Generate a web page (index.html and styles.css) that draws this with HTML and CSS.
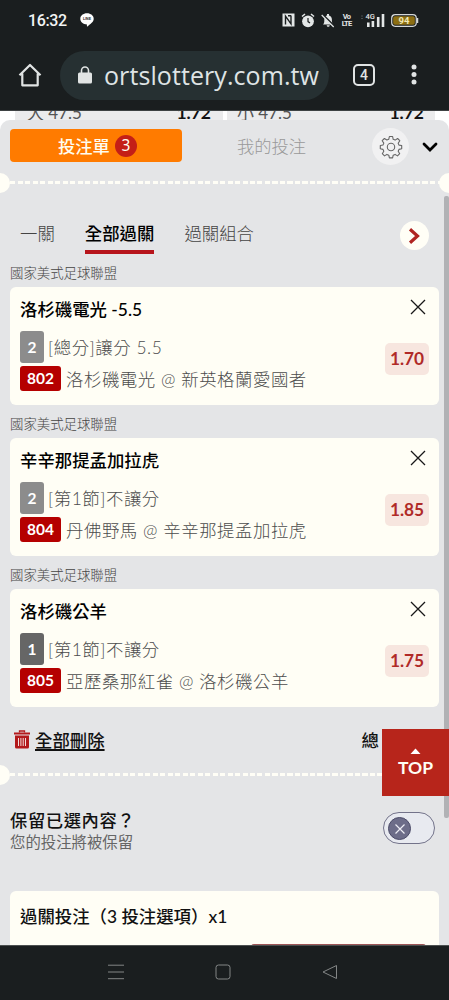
FILE: index.html
```html
<!DOCTYPE html>
<html lang="zh-Hant">
<head>
<meta charset="utf-8">
<title>投注單</title>
<link rel="stylesheet" href="styles.css">
</head>
<body>
<div class="phone">
  <header class="chrome">
    <div class="status">
      <span class="clock">16:32</span>
      <svg class="line-icon" width="14" height="14" viewBox="0 0 14 14"><path d="M7 .3C10.800.3 13.700 2.700 13.700 5.800C13.700 9 10.500 10.900 7.500 13.400C6.700 14 6.900 12.500 7 11.500C3.200 11.500.3 9 .3 5.800C.3 2.700 3.200.3 7 .3z" fill="#fff"/><text x="7" y="7.300" text-anchor="middle" class="line-label">LINE</text></svg>
      <div class="status-icons">
        <svg width="13" height="14" viewBox="0 0 13 14"><path d="M.5.500h12v13h-12z" fill="#e3e6e6"/><path d="M3.500 11.500V3.200l5.500 7.600V2.500M6 2.800h3" fill="none" stroke="#1a1e1f" stroke-width="1.400"/></svg>
        <svg class="gap-a" width="14" height="15" viewBox="0 0 14 15"><circle cx="7" cy="8.300" r="5.900" fill="#e3e6e6"/><path d="M1 3.500L4 1M13 3.500L10 1" stroke="#e3e6e6" stroke-width="1.600"/><path d="M7 5v3.600l2 1.500" fill="none" stroke="#1a1e1f" stroke-width="1.200"/></svg>
        <svg class="gap-b" width="14" height="15" viewBox="0 0 14 15"><path d="M2 11.500c1.500-1.200 1.300-3 1.300-5C3.500 3.800 5 2.800 6 2.500V1h2v1.500c1.500.3 2.900 2 2.900 4 0 2 0 3.800 1.300 5zM5.700 12.300h3c0 2-3 2-3 0z" fill="#e3e6e6"/><path d="M1.500 1.500l12 12" stroke="#1a1e1f" stroke-width="2"/><path d="M.700 2l12 12" stroke="#e3e6e6" stroke-width="1.200"/></svg>
        <span class="volte">Vo<br>LTE</span>
        <svg class="signal" width="24" height="15" viewBox="0 0 24 15"><path d="M.5 3h1M.5 5.500h1" stroke="#767b7c"/><text x="4.500" y="6.300" class="fourg">4G</text><path d="M7.300 14V9.500M11.900 14V8M17.200 14V4M22 14V1" stroke="#e3e6e6" stroke-width="2.600"/></svg>
        <svg class="battery" width="28" height="13" viewBox="0 0 28 13"><rect x=".7" y=".7" width="24.600" height="11.600" rx="3.500" fill="#1a1e1f" stroke="#d5d8d7" stroke-width="1.200"/><rect x="2.200" y="2.200" width="21.600" height="8.600" rx="1.800" fill="#8c6e12"/><path d="M26.500 4v5" stroke="#d5d8d7" stroke-width="1.500"/><text x="13" y="10" text-anchor="middle" class="battery-label">94</text></svg>
      </div>
    </div>
    <div class="toolbar">
      <svg class="home" width="24" height="24" viewBox="0 0 24 24"><path d="M1.500 12.300L12 2l10.500 10.300M4.300 10.500v11.800h15.400V10.500" fill="none" stroke="#e1e4e4" stroke-width="2.200" stroke-linejoin="round"/></svg>
      <div class="address">
        <svg width="14" height="18" viewBox="0 0 14 18"><rect x="0" y="6.500" width="14" height="11" rx="1.500" fill="#e1e4e4"/><path d="M3.500 7V4.500a3.500 3.500 0 0 1 7 0V7" fill="none" stroke="#e1e4e4" stroke-width="1.600"/></svg>
        <div class="url">ortslottery.com.tw</div>
      </div>
      <div class="tabcount">4</div>
      <svg class="dots" width="6" height="22" viewBox="0 0 6 22"><g fill="#e1e4e4"><circle cx="3" cy="3" r="2.500"/><circle cx="3" cy="10.500" r="2.500"/><circle cx="3" cy="18" r="2.500"/></g></svg>
    </div>
  </header>

  <div class="strip">
    <div class="strip-cell first"><span>大 47.5</span><b>1.72</b></div>
    <div class="strip-cell second"><span>小 47.5</span><b>1.72</b></div>
  </div>

  <main class="panel">
    <div class="panel-head">
      <div class="slip-tab">投注單<span class="count">3</span></div>
      <div class="mine-tab">我的投注</div>
      <div class="gear"><svg width="24" height="24" viewBox="0 0 24 24" fill="none" stroke="#666" stroke-width="1.100" stroke-linejoin="round"><circle cx="12" cy="12" r="3.700"/><path d="M10.400 1.500h3.200l.6 2.800 1.900.8 2.500-1.600 2.200 2.200-1.600 2.500.8 1.900 2.700.4v3.200l-2.700.7-.8 1.900 1.500 2.400-2.200 2.200-2.400-1.500-1.900.8-.6 2.700h-3.200l-.6-2.700-1.900-.8-2.400 1.500-2.200-2.200 1.500-2.400-.8-1.900-2.700-.7v-3.200l2.700-.5.800-1.900-1.600-2.400 2.200-2.200 2.500 1.500 1.900-.8z"/></svg></div>
      <svg class="chevron" width="16" height="11" viewBox="0 0 16 11"><path d="M2 2l6 6 6-6" fill="none" stroke="#000" stroke-width="2.800" stroke-linecap="round"/></svg>
    </div>
    <div class="divider"><i></i><i></i></div>

    <nav class="tabs">
      <span>一關</span><span class="active">全部過關</span><span>過關組合</span>
      <div class="next"><svg width="14" height="18" viewBox="0 0 14 18"><path d="M2 2.200L9.500 9 2 15.800" fill="none" stroke="#b02422" stroke-width="3.200"/></svg></div>
    </nav>

    <section class="bet">
      <h3>國家美式足球聯盟</h3>
      <div class="card">
        <div class="info">
          <div class="title">洛杉磯電光 -5.5</div>
          <div class="row one"><b class="num">2</b><span>[總分]讓分 5.5</span></div>
          <div class="row two"><b class="code">802</b><span>洛杉磯電光 @ 新英格蘭愛國者</span></div>
        </div>
        <div class="side"><svg width="16" height="16" viewBox="0 0 16 16"><path d="M1 1l14 14M15 1L1 15" stroke="#181818" stroke-width="1.300"/></svg><b class="odds">1.70</b></div>
      </div>
    </section>
    <section class="bet">
      <h3>國家美式足球聯盟</h3>
      <div class="card">
        <div class="info">
          <div class="title">辛辛那提孟加拉虎</div>
          <div class="row one"><b class="num">2</b><span>[第1節]不讓分</span></div>
          <div class="row two"><b class="code">804</b><span>丹佛野馬 @ 辛辛那提孟加拉虎</span></div>
        </div>
        <div class="side"><svg width="16" height="16" viewBox="0 0 16 16"><path d="M1 1l14 14M15 1L1 15" stroke="#181818" stroke-width="1.300"/></svg><b class="odds">1.85</b></div>
      </div>
    </section>
    <section class="bet">
      <h3>國家美式足球聯盟</h3>
      <div class="card">
        <div class="info">
          <div class="title">洛杉磯公羊</div>
          <div class="row one"><b class="num dark">1</b><span>[第1節]不讓分</span></div>
          <div class="row two"><b class="code">805</b><span>亞歷桑那紅雀 @ 洛杉磯公羊</span></div>
        </div>
        <div class="side"><svg width="16" height="16" viewBox="0 0 16 16"><path d="M1 1l14 14M15 1L1 15" stroke="#181818" stroke-width="1.300"/></svg><b class="odds">1.75</b></div>
      </div>
    </section>

    <div class="summary">
      <svg width="16" height="19" viewBox="0 0 16 19"><path d="M5.500 2.500V1h5v1.500" fill="none" stroke="#b3191b" stroke-width="1.300"/><path d="M0 2.500h16v2H0zM1 5.500h14V17q0 1.500-1.500 1.500h-11Q1 18.500 1 17z" fill="#b3191b"/><path d="M4.500 8v8M6.900 8v8M9.200 8v8M11.500 8v8" stroke="#f3dedd"/></svg>
      <span class="delete">全部刪除</span>
      <span class="total">總</span>
    </div>
    <div class="divider lower"><i></i><i></i></div>

    <div class="keep">
      <div><div class="keep-title">保留已選內容？</div><div class="keep-sub">您的投注將被保留</div></div>
      <div class="toggle"><span><svg width="12" height="12" viewBox="0 0 12 12"><path d="M1.500 1.500l9 9M10.500 1.500l-9 9" stroke="#eeeef5" stroke-width="1.200"/></svg></span></div>
    </div>
    <div class="parlay"><div class="parlay-title">過關投注（3 投注選項）x1</div><div class="parlay-input"></div></div>

    <div class="scrollbar"></div>
    <div class="top"><svg width="11" height="7" viewBox="0 0 11 7"><path d="M.5 6L5.500.5l5 5.500z" fill="#fff"/></svg><span>TOP</span></div>
  </main>

  <footer class="nav">
    <svg width="16" height="16" viewBox="0 0 16 16"><path d="M0 1.200h16M0 8h16M0 14.700h16" stroke="#838686"/></svg>
    <svg width="16" height="16" viewBox="0 0 16 16"><rect x="1" y="1" width="14" height="14" rx="2.500" fill="none" stroke="#838686"/></svg>
    <svg width="16" height="16" viewBox="0 0 16 16"><path d="M14.500 1.500v13L1 8z" fill="none" stroke="#838686" stroke-linejoin="round"/></svg>
  </footer>
</div>
</body>
</html>
```

FILE: styles.css
```css
* { box-sizing: border-box; }
body {
  margin: 0;
  font-family: Lato, "Noto Sans CJK TC", sans-serif;
  color: #111;
}
svg { display: block; flex: none; }
.phone {
  width: 449px;
  height: 1000px;
  overflow: hidden;
  display: flex;
  flex-direction: column;
  white-space: nowrap;
}
.chrome {
  height: 111px;
  flex: none;
  background: #1a1e1f;
  border-bottom: 1px solid #3e4243;
}
.status {
  height: 40px;
  display: flex;
  align-items: center;
  padding-left: 28px;
}
.clock {
  width: 52px;
  padding-top: 1px;
  font: 500 16px/20px Roboto, sans-serif;
  letter-spacing: -0.4px;
  color: #f2f4f4;
}
.line-label { font: bold 3.5px "Liberation Sans", sans-serif; fill: #222; }
.status-icons { display: flex; align-items: center; margin-left: 188px; }
.gap-a { margin-left: 6px; }
.gap-b { margin-left: 6px; }
.volte {
  width: 11px;
  margin-left: 6px;
  font: bold 7.500px/7px Roboto, sans-serif;
  letter-spacing: -0.8px;
  text-align: center;
  color: #e3e6e6;
}
.signal { margin-left: 9px; }
.fourg { font: 500 7.500px Roboto, sans-serif; fill: #e3e6e6; }
.battery { margin-left: 6px; }
.battery-label { font: bold 9.500px Roboto, sans-serif; fill: #f1e8b5; }
.toolbar { display: flex; align-items: center; height: 70px; padding-left: 18px; }
.address {
  width: 269px;
  height: 49px;
  margin-left: 18px;
  padding-left: 18px;
  border-radius: 25px;
  display: flex;
  align-items: center;
  background: #263032;
}
.url {
  margin-left: 12px;
  font: 400 25px/32px "Open Sans", sans-serif;
  letter-spacing: 0.08px;
  color: #dfe4e5;
}
.tabcount {
  width: 22px;
  height: 22px;
  margin-left: 24px;
  border: 2px solid #e1e4e4;
  border-radius: 5px;
  font: 500 14px/18px Roboto, sans-serif;
  text-align: center;
  color: #e1e4e4;
}
.dots { margin-left: 36px; }

.strip { height: 19px; flex: none; display: flex; background: #fff; padding-left: 15px; }
.strip-cell {
  height: 19px;
  overflow: hidden;
  display: flex;
  justify-content: space-between;
  background: #ebebec;
  font-size: 17px;
  line-height: 22px;
  color: #555;
}
.strip-cell span, .strip-cell b { margin-top: -9px; }
.strip-cell b { color: #111; font-size: 17.500px; }
.first { width: 208px; padding: 0 12px; }
.second { width: 208px; margin-left: 4px; padding: 0 11px 0 10px; }

.panel {
  position: relative;
  height: 825px;
  flex: none;
  margin-top: -10px;
  overflow: hidden;
  border-radius: 10px 10px 0 0;
  background: #e4e5e7;
}
.panel-head { height: 61px; padding: 8px 0 0 10px; display: flex; align-items: flex-start; }
.slip-tab {
  width: 172px;
  height: 33px;
  margin-top: 1px;
  border-radius: 4px;
  display: flex;
  align-items: center;
  padding-left: 48px;
  background: #ff7b00;
  color: #fffdf0;
  font-size: 17.300px;
  font-weight: 500;
}
.count {
  width: 22px;
  height: 22px;
  margin-left: 5px;
  border-radius: 50%;
  background: #c41f17;
  font: 400 15.500px/21px "Noto Sans", sans-serif;
  text-align: center;
}
.mine-tab { width: 135px; margin: 7px 0 0 55px; font-size: 17.300px; line-height: 24px; font-weight: 300; color: #999; }
.gear {
  width: 37px;
  height: 37px;
  border-radius: 50%;
  display: grid;
  place-items: center;
  background: #f1f1f2;
}
.chevron { margin: 14px 0 0 13px; }
.divider {
  height: 3px;
  display: flex;
  align-items: center;
  justify-content: space-between;
  background: repeating-linear-gradient(90deg, #fffef6 0 5px, transparent 5px 7.500px) 10px 0 / 430px 3px no-repeat;
}
.divider i { width: 20px; height: 20px; margin: 0 -10px; border-radius: 50%; background: #fffef6; flex: none; }

.tabs {
  height: 77px;
  display: flex;
  padding: 36px 0 0 20px;
  font-size: 17.400px;
  line-height: 27px;
  font-weight: 300;
  color: #444;
}
.tabs span { height: 34px; margin-right: 30px; }
.tabs .active { font-weight: 500; color: #000; border-bottom: 4px solid #b7151c; }
.next {
  width: 29px;
  height: 29px;
  margin: 1px 20px 0 auto;
  border-radius: 50%;
  display: grid;
  place-items: center;
  background: #fffef6;
}
.bet { height: 151px; padding: 0 10px; }
.bet h3 { height: 26px; margin: 0; font-size: 13.400px; line-height: 25px; font-weight: 300; color: #444; }
.card {
  height: 118px;
  padding: 10px 10px 0;
  border-radius: 6px;
  background: #fffef5;
  display: flex;
  justify-content: space-between;
}
.title { font-size: 17.400px; line-height: 25px; font-weight: 500; color: #000; }
.row { display: flex; align-items: center; font-size: 17.400px; font-weight: 300; letter-spacing: 0.55px; color: #4c4c4c; }
.row span { margin-top: -1px; }
.one { height: 31px; margin-top: 9px; }
.two { height: 25px; margin-top: 4px; }
.num, .code {
  border-radius: 3px;
  font-size: 15.500px;
  font-weight: 700;
  letter-spacing: 0;
  text-align: center;
  color: #fff;
}
.num { width: 24px; height: 32px; line-height: 32px; margin-right: 4px; background: #8c8c8c; }
.num.dark { background: #666; }
.code { width: 41px; height: 25px; line-height: 25px; margin-right: 5px; background: #b50000; }
.side { display: flex; flex-direction: column; align-items: flex-end; }
.side svg { margin: 2px 3px 0 0; }
.odds {
  width: 44px;
  height: 32px;
  margin-top: 28px;
  border-radius: 5px;
  background: #f7e6df;
  font-size: 17.300px;
  line-height: 31px;
  text-align: center;
  color: #b02a27;
}
.summary { height: 59px; padding: 14px 70px 0 14px; display: flex; align-items: flex-start; font-size: 17.400px; line-height: 25px; }
.summary svg { margin-top: 2px; }
.delete { margin-left: 5px; text-decoration: underline; text-decoration-thickness: 1.500px; text-underline-offset: 2px; font-weight: 500; }
.total { margin-left: auto; font-weight: 500; }
.keep { display: flex; justify-content: space-between; height: 115px; padding: 33px 14px 0 10px; }
.keep-title { font-size: 17.300px; line-height: 24px; font-weight: 500; letter-spacing: 0.6px; }
.keep-sub { margin-top: -1px; font-size: 15.400px; line-height: 20px; font-weight: 400; color: #666; }
.toggle { width: 52px; height: 32px; margin-top: 3px; border: 1.500px solid #73738a; border-radius: 16px; padding: 4px; background: #e8eaf0; }
.toggle span { width: 23px; height: 23px; border-radius: 50%; display: grid; place-items: center; background: #6d6d89; border: 1px solid #4c4c69; }
.parlay { height: 60px; margin: 0 10px; padding: 13px 10px 0; border-radius: 6px 6px 0 0; background: #fffef5; }
.parlay-title { font-size: 17.400px; line-height: 25px; font-weight: 500; }
.parlay-input { width: 175px; height: 8px; margin: 15px 3px 0 auto; border-top: 1.500px solid #9d5556; border-radius: 3px 3px 0 0; }

.scrollbar { position: absolute; right: 0; top: 76px; width: 5px; height: 622px; background: #b1b2b5; border-radius: 2px; }
.top {
  position: absolute;
  right: 0;
  top: 609px;
  width: 67px;
  height: 67px;
  padding-top: 19px;
  display: flex;
  flex-direction: column;
  align-items: center;
  background: #b7251b;
  color: #fffdf5;
  font-size: 17.500px;
  line-height: 26px;
  font-weight: 700;
}
.nav {
  height: 55px;
  flex: none;
  display: flex;
  justify-content: center;
  gap: 91px;
  padding: 18px 3px 0 0;
  background: #1a1e1f;
  border-top: 1px solid #4c5050;
}
```
